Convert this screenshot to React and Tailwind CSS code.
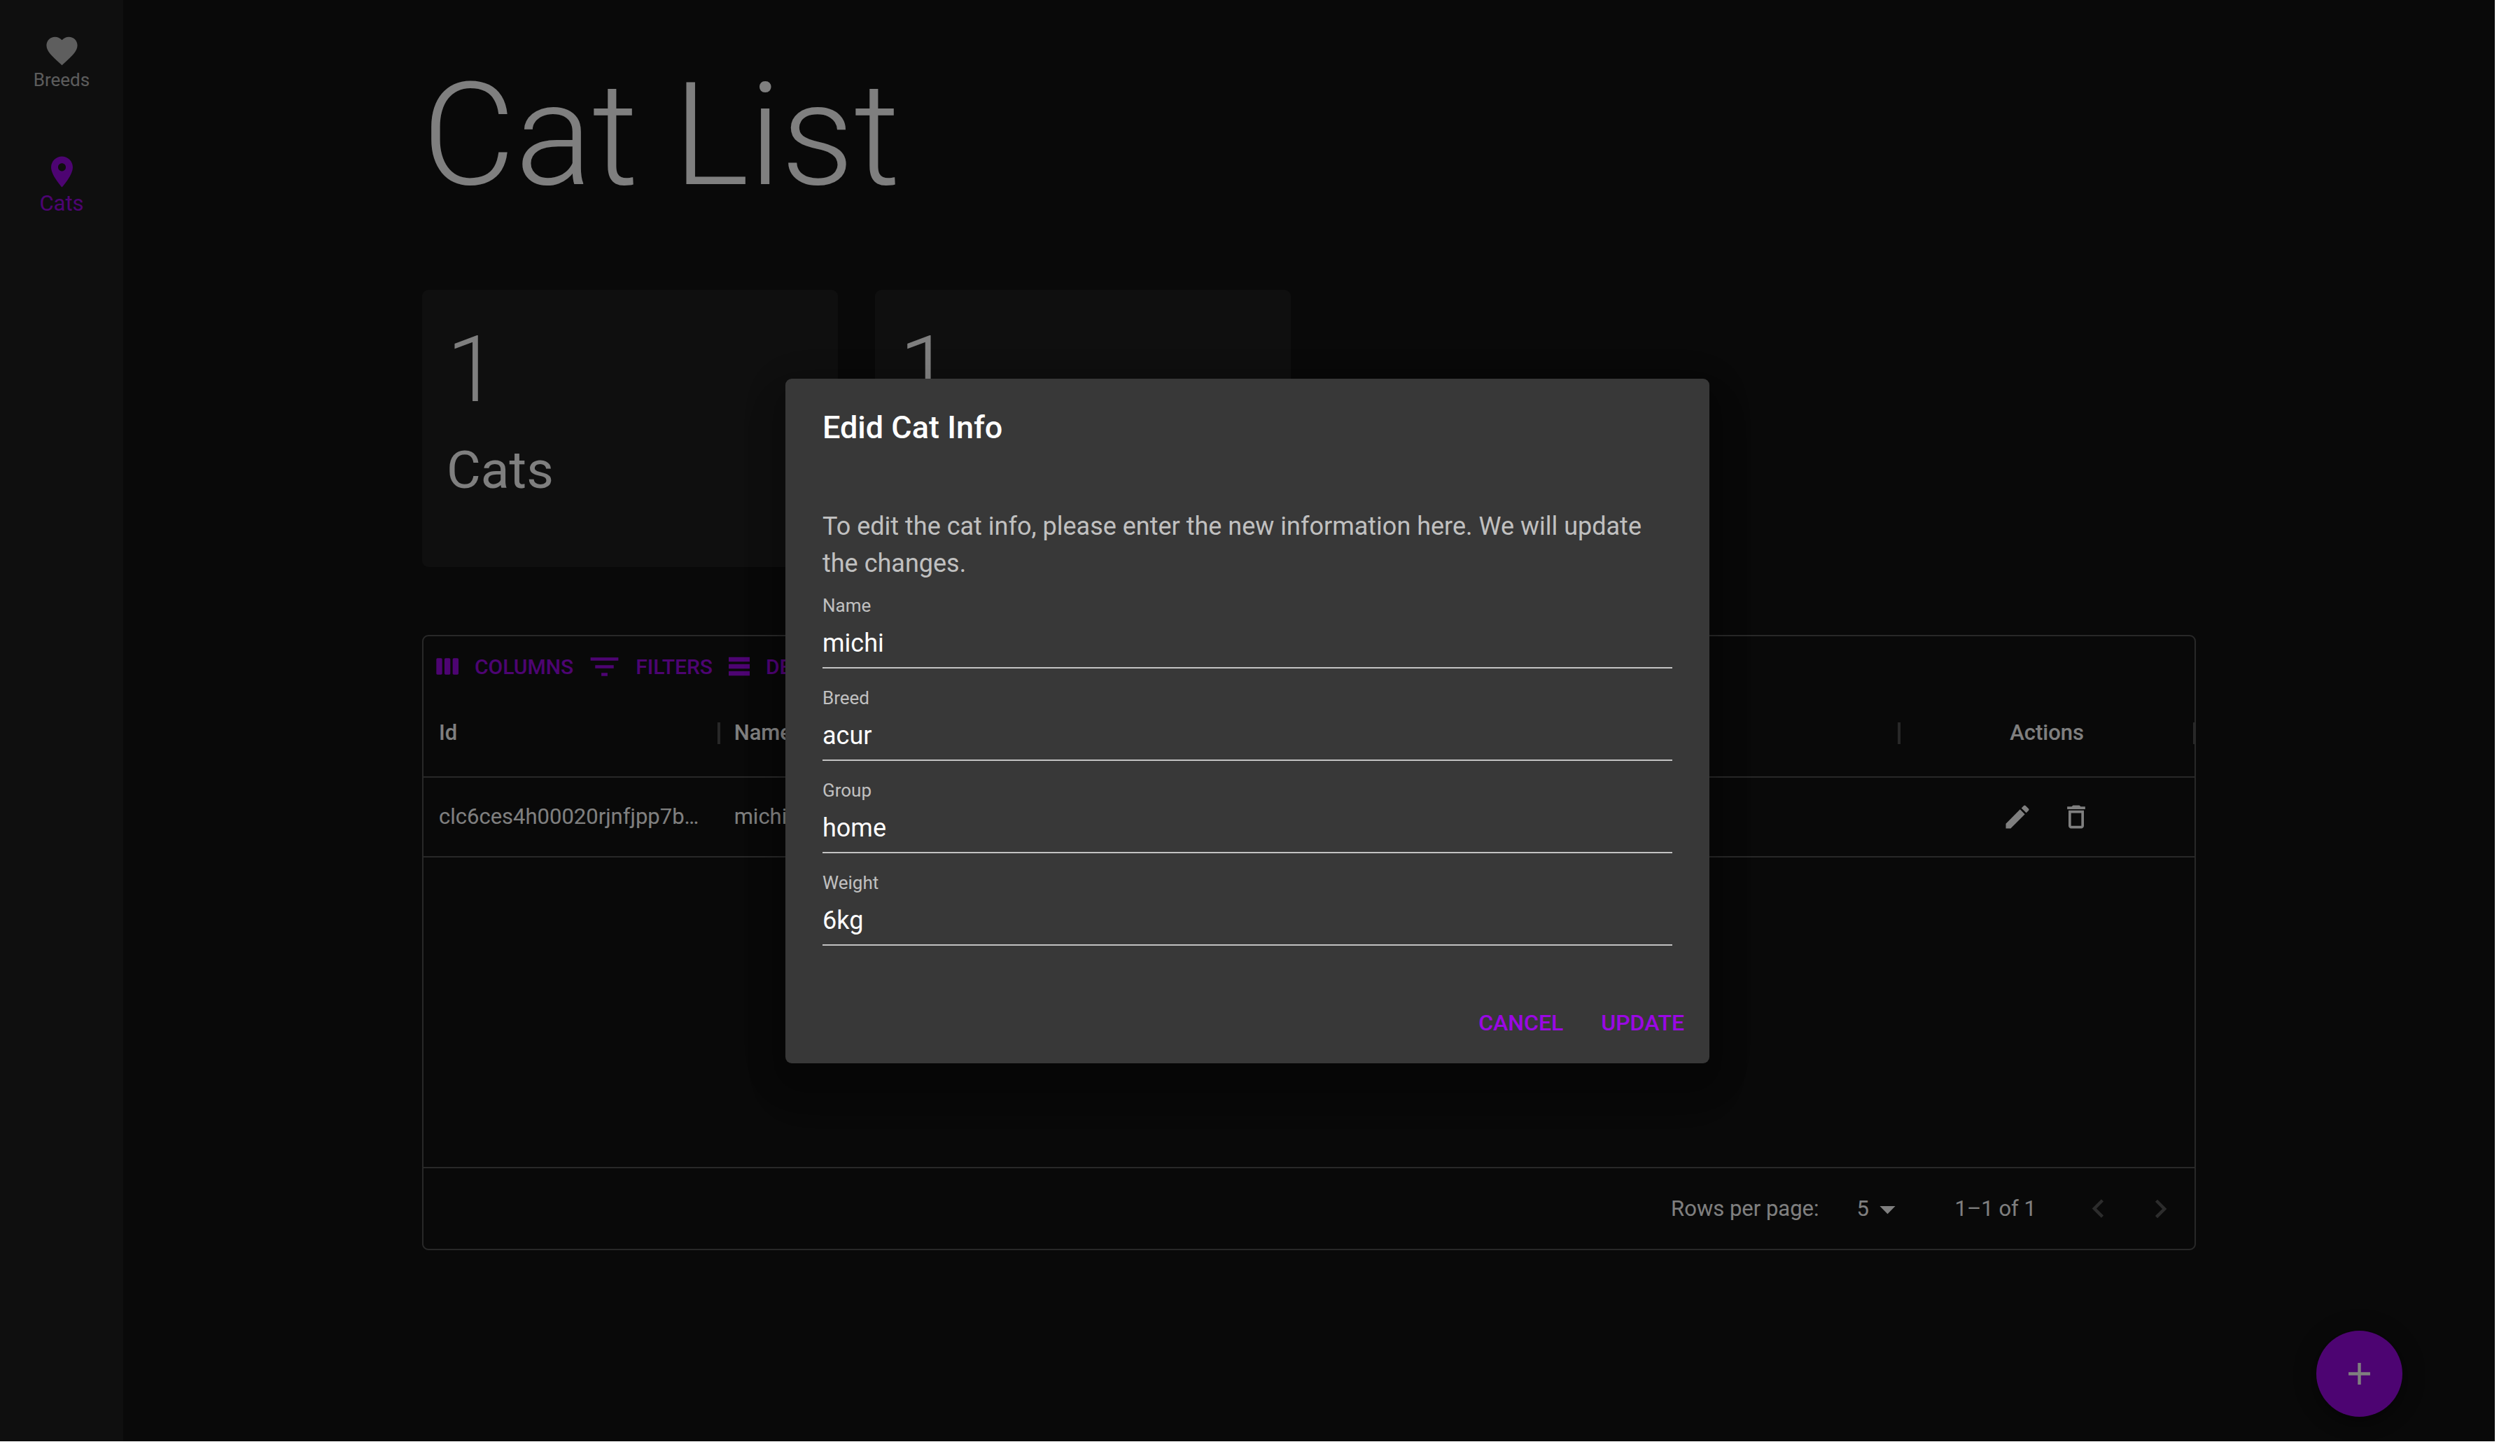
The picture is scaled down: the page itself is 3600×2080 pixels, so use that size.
import React from "react";

const ICONS = {
  heart:
    "M12 21.35l-1.45-1.32C5.4 15.36 2 12.28 2 8.5 2 5.42 4.42 3 7.5 3c1.74 0 3.41.81 4.5 2.09C13.09 3.81 14.76 3 16.5 3 19.58 3 22 5.42 22 8.5c0 3.78-3.4 6.86-8.55 11.54L12 21.35z",
  pin: "M12 2C8.13 2 5 5.13 5 9c0 5.25 7 13 7 13s7-7.75 7-13c0-3.87-3.13-7-7-7zm0 9.5c-1.38 0-2.5-1.12-2.5-2.5s1.12-2.5 2.5-2.5 2.5 1.12 2.5 2.5-1.12 2.5-2.5 2.5z",
  columns:
    "M6 5H3c-.55 0-1 .45-1 1v12c0 .55.45 1 1 1h3c.55 0 1-.45 1-1V6c0-.55-.45-1-1-1zm14 0h-3c-.55 0-1 .45-1 1v12c0 .55.45 1 1 1h3c.55 0 1-.45 1-1V6c0-.55-.45-1-1-1zm-7 0h-3c-.55 0-1 .45-1 1v12c0 .55.45 1 1 1h3c.55 0 1-.45 1-1V6c0-.55-.45-1-1-1z",
  filter: "M10 18h4v-2h-4v2zM3 6v2h18V6H3zm3 7h12v-2H6v2z",
  density: "M21 8H3V4h18v4zm0 2H3v4h18v-4zm0 6H3v4h18v-4z",
  exportFile: "M19 12v7H5v-7H3v7c0 1.1.9 2 2 2h14c1.1 0 2-.9 2-2v-7h-2zm-6 .67l2.59-2.58L17 11.5l-5 5-5-5 1.41-1.41L11 12.67V3h2z",
  edit: "M3 17.25V21h3.75L17.81 9.94l-3.75-3.75L3 17.25zM20.71 7.04c.39-.39.39-1.02 0-1.41l-2.34-2.34c-.39-.39-1.02-.39-1.41 0l-1.83 1.83 3.75 3.75 1.83-1.83z",
  trash: "M6 19c0 1.1.9 2 2 2h8c1.1 0 2-.9 2-2V7H6v12zM8 9h8v10H8V9zm7.5-5l-1-1h-5l-1 1H5v2h14V4z",
  dropdown: "M7 10l5 5 5-5z",
  left: "M15.41 16.09l-4.58-4.59 4.58-4.59L14 5.5l-6 6 6 6z",
  right: "M8.59 16.34l4.58-4.59-4.58-4.59L10 5.75l6 6-6 6z",
  plus: "M19 13h-6v6h-2v-6H5v-2h6V5h2v6h6v2z",
};

function Icon({ name, className }) {
  return (
    <svg viewBox="0 0 24 24" fill="currentColor" aria-hidden="true" className={`shrink-0 ${className}`}>
      <path d={ICONS[name]} />
    </svg>
  );
}

function NavItem({ icon, label, active }) {
  return (
    <a
      href="#"
      aria-current={active ? "page" : undefined}
      className={`flex h-[176px] flex-col items-center justify-center ${
        active ? "text-[31px] text-[#9a08e4]" : "text-[26px] text-white/70"
      }`}
    >
      <Icon name={icon} className="size-[53px]" />
      <span className="leading-[1.2]">{label}</span>
    </a>
  );
}

function StatCard({ value, label }) {
  return (
    <div className="h-[396px] rounded-[9px] bg-[#1e1e1e] p-[35px]">
      <div className="text-[132px] leading-[158px] font-light">{value}</div>
      <div className="mt-[18px] text-[75px] leading-[92px]">{label}</div>
    </div>
  );
}

function ToolbarButton({ icon, label, large }) {
  return (
    <button
      type="button"
      className="flex h-[68px] items-center gap-[18px] px-[11px] text-[30px] font-medium text-[#9a08e4] uppercase"
    >
      <Icon name={icon} className={large ? "-ml-1 size-[53px]" : "-ml-1 size-10"} />
      {label}
    </button>
  );
}

const COLUMNS = ["Id", "Name", "Breed", "Group", "Weight"];
const ROWS = [["clc6ces4h00020rjnfjpp7b8k", "michi", "acur", "home", "6kg"]];

function HeaderCell({ children, center }) {
  return (
    <th scope="col" className={`relative h-[124px] px-[22px] font-medium ${center ? "text-center" : "text-left"}`}>
      {children}
      <span className="absolute top-[46px] -right-0.5 h-[31px] w-1 bg-[#515151]" />
    </th>
  );
}

function CatGrid() {
  return (
    <section className="mt-[97px] flex h-[879px] flex-col overflow-hidden rounded-[9px] border-2 border-[#515151] text-[31px]">
      <div className="flex px-2 pt-[9px]">
        <ToolbarButton icon="columns" label="Columns" />
        <ToolbarButton icon="filter" label="Filters" large />
        <ToolbarButton icon="density" label="Density" />
        <ToolbarButton icon="exportFile" label="Export" />
      </div>
      <div className="flex-1">
        <table className="w-full table-fixed border-collapse">
          <thead>
            <tr className="border-b-2 border-[#515151]">
              {COLUMNS.map((name) => (
                <HeaderCell key={name}>{name}</HeaderCell>
              ))}
              <HeaderCell center>Actions</HeaderCell>
            </tr>
          </thead>
          <tbody>
            {ROWS.map((row) => (
              <tr key={row[0]} className="border-b-2 border-[#515151]">
                {row.map((cell) => (
                  <td key={cell} className="h-[114px] truncate px-[22px]">
                    {cell}
                  </td>
                ))}
                <td>
                  <div className="flex justify-center gap-[18px]">
                    <button type="button" aria-label="Edit" className="p-[11px]">
                      <Icon name="edit" className="size-11" />
                    </button>
                    <button type="button" aria-label="Delete" className="p-[11px]">
                      <Icon name="trash" className="size-11" />
                    </button>
                  </div>
                </td>
              </tr>
            ))}
          </tbody>
        </table>
      </div>
      <div className="flex h-[117px] items-center justify-end border-t-2 border-[#515151] pt-0.5 pr-1">
        <label htmlFor="page-size">Rows per page:</label>
        <div className="relative mr-[70px] ml-[18px] flex w-[106px] items-center">
          <select id="page-size" defaultValue="5" className="w-full appearance-none pl-9">
            <option>5</option>
          </select>
          <Icon name="dropdown" className="pointer-events-none absolute right-0 size-[53px]" />
        </div>
        <span>1–1 of 1</span>
        <div className="ml-11 flex text-white/30">
          <button type="button" disabled aria-label="Previous page" className="p-[18px]">
            <Icon name="left" className="size-[53px]" />
          </button>
          <button type="button" disabled aria-label="Next page" className="p-[18px]">
            <Icon name="right" className="size-[53px]" />
          </button>
        </div>
      </div>
    </section>
  );
}

function Field({ id, label, value }) {
  return (
    <div className="mb-[9px] flex flex-col pt-[18px]">
      <label htmlFor={id} className="h-[35px] text-[26px] leading-[31px] text-white/70">
        {label}
      </label>
      <input
        id={id}
        type="text"
        defaultValue={value}
        className="h-[70px] border-b-2 border-white/70 text-[36px] text-white outline-none"
      />
    </div>
  );
}

function DialogButton({ children }) {
  return (
    <button type="button" className="h-20 min-w-[141px] px-[18px] text-[32px] font-medium text-[#9a08e4] uppercase">
      {children}
    </button>
  );
}

function EditDialog() {
  return (
    <div className="absolute inset-0 flex items-center justify-center bg-black/50">
      <form
        role="dialog"
        aria-labelledby="dialog-title"
        className="w-full max-w-[1320px] rounded-[9px] bg-[#383838] shadow-[0_24px_33px_-15px_rgba(0,0,0,0.2),0_40px_60px_0_rgba(0,0,0,0.14),0_16px_60px_6px_rgba(0,0,0,0.12)]"
      >
        <h2 id="dialog-title" className="px-[53px] py-[35px] text-[45px] leading-[70px] font-medium">
          Edid Cat Info
        </h2>
        <div className="px-[53px] pt-[45px] pb-[43px]">
          <p className="text-[36px] leading-[53px] text-white/70">
            To edit the cat info, please enter the new information here. We will update the changes.
          </p>
          <Field id="cat-name" label="Name" value="michi" />
          <Field id="cat-breed" label="Breed" value="acur" />
          <Field id="cat-group" label="Group" value="home" />
          <Field id="cat-weight" label="Weight" value="6kg" />
        </div>
        <div className="flex justify-end gap-[18px] p-[18px]">
          <DialogButton>Cancel</DialogButton>
          <DialogButton>Update</DialogButton>
        </div>
      </form>
    </div>
  );
}

export default function App() {
  return (
    <div className="flex min-h-screen bg-white pr-9 pb-[21px] font-[Roboto,sans-serif] text-white">
      <div className="relative flex flex-1 bg-[#121212]">
        <nav className="w-[176px] shrink-0 bg-[#1e1e1e]">
          <NavItem icon="heart" label="Breeds" />
          <NavItem icon="pin" label="Cats" active />
        </nav>
        <main className="flex-1">
          <div className="mx-auto max-w-[2640px] px-[53px] pt-[70px]">
            <h1 className="text-[205px] leading-[246px] font-light">Cat List</h1>
            <div className="mt-[98px] grid grid-cols-4 gap-[53px]">
              <StatCard value="1" label="Cats" />
              <StatCard value="1" label="Breeds" />
            </div>
            <CatGrid />
          </div>
        </main>
        <button
          type="button"
          aria-label="Add cat"
          className="absolute right-[132px] bottom-[35px] flex size-[123px] items-center justify-center rounded-full bg-[#9a08e4] shadow-[0_7px_11px_-2px_rgba(0,0,0,0.2),0_13px_22px_0_rgba(0,0,0,0.14),0_2px_40px_0_rgba(0,0,0,0.12)]"
        >
          <Icon name="plus" className="size-[53px]" />
        </button>
        <EditDialog />
      </div>
    </div>
  );
}
